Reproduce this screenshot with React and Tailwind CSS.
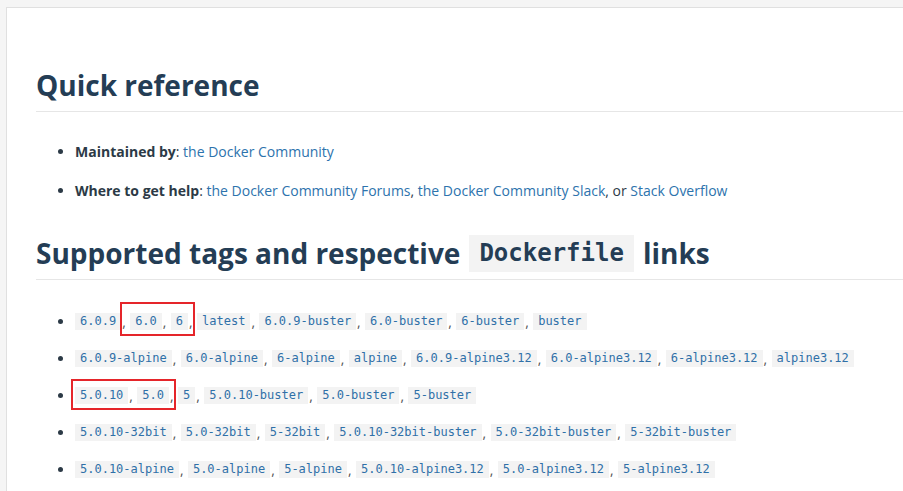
const rows = [
  ["6.0.9", "6.0", "6", "latest", "6.0.9-buster", "6.0-buster", "6-buster", "buster"],
  ["6.0.9-alpine", "6.0-alpine", "6-alpine", "alpine", "6.0.9-alpine3.12", "6.0-alpine3.12", "6-alpine3.12", "alpine3.12"],
  ["5.0.10", "5.0", "5", "5.0.10-buster", "5.0-buster", "5-buster"],
  ["5.0.10-32bit", "5.0-32bit", "5-32bit", "5.0.10-32bit-buster", "5.0-32bit-buster", "5-32bit-buster"],
  ["5.0.10-alpine", "5.0-alpine", "5-alpine", "5.0.10-alpine3.12", "5.0-alpine3.12", "5-alpine3.12"],
];

const sans = "font-['Open_Sans','Noto_Sans',sans-serif]";
const mono = "font-['DejaVu_Sans_Mono','Liberation_Mono',monospace]";

const Bullet = () => (
  <span className="w-[5px] h-[5px] rounded-full bg-[#2c3a46] shrink-0 ml-[22px] mr-[12px]" />
);

const Link = ({ children }) => (
  <a href="#" className="text-[#2d73ad]">
    {children}
  </a>
);

const App = () => {
  return (
    <div className={`relative h-[491px] overflow-hidden bg-[#f5f5f5] pl-[6px] pt-[7px] ${sans}`}>
      <div className="h-full bg-white border-l border-t border-[#e0e0e0] pl-[29px] pt-[57px]">
        <h2 className="text-[28px] leading-[40px] font-bold text-[#243d55] pb-[6px] border-b border-[#e6e6e6]">
          Quick reference
        </h2>

        <ul className="mt-[29px] flex flex-col gap-[18px] text-[14px] text-[#2c3a46]">
          <li className="flex items-center h-[21px]">
            <Bullet />
            <span>
              <b>Maintained by</b>: <Link>the Docker Community</Link>
            </span>
          </li>
          <li className="flex items-center h-[21px]">
            <Bullet />
            <span>
              <b>Where to get help</b>: <Link>the Docker Community Forums</Link>,{" "}
              <Link>the Docker Community Slack</Link>, or <Link>Stack Overflow</Link>
            </span>
          </li>
        </ul>

        <h2 className="mt-[32px] text-[28px] leading-[40px] font-bold text-[#243d55] pb-[6px] border-b border-[#e6e6e6] flex items-center">
          Supported tags and respective
          <code className={`${mono} mx-[9px] px-[10px] h-[37px] flex items-center bg-[#f3f3f3] text-[24px] font-bold`}>
            Dockerfile
          </code>
          links
        </h2>

        <ul className="mt-[31px] flex flex-col gap-[16px] text-[14px] text-[#2c3a46]">
          {rows.map((tags, i) => (
            <li key={i} className="flex items-center h-[21px]">
              <Bullet />
              <span className="flex items-center whitespace-pre">
                {tags.map((t, j) => (
                  <span key={j} className="flex items-center">
                    <code className={`${mono} text-[12px] leading-[17px] px-[5px] bg-[#f3f3f3] text-[#2f70a8]`}>
                      {t}
                    </code>
                    {j < tags.length - 1 && <span className="w-[9px] pl-[1px] text-[#555]">, </span>}
                  </span>
                ))}
              </span>
            </li>
          ))}
        </ul>
      </div>

      <div className="absolute left-[120px] top-[302px] w-[75px] h-[34px] border-2 border-[#e5252a]" />
      <div className="absolute left-[71px] top-[379px] w-[105px] h-[31px] border-2 border-[#e5252a]" />
    </div>
  );
};

export default App;
